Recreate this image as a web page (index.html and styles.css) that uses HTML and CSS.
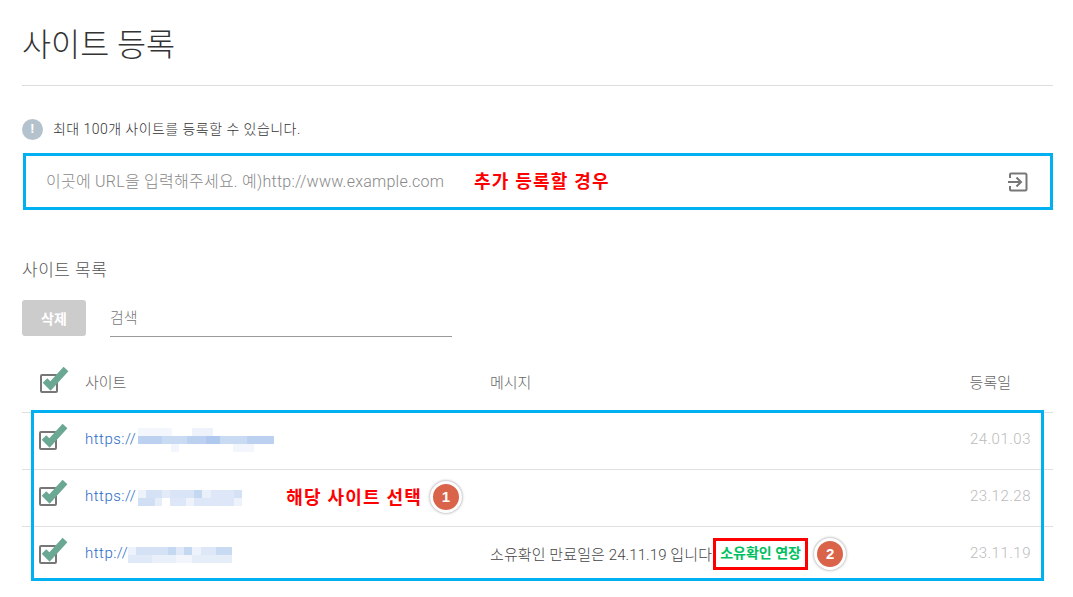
FILE: index.html
```html
<!DOCTYPE html>
<html lang="ko">
<head>
<meta charset="utf-8">
<title>사이트 등록</title>
<link rel="stylesheet" href="styles.css">
</head>
<body>
<main class="page">
  <h1 class="title">사이트 등록</h1>
  <p class="notice">
    <span class="notice-icon">!</span>
    <span>최대 100개 사이트를 등록할 수 있습니다.</span>
  </p>
  <div class="url-box">
    <span class="placeholder">이곳에 URL을 입력해주세요. 예)http://www.example.com</span>
    <span class="note note-url">추가 등록할 경우</span>
    <svg class="enter-icon" width="20" height="20" viewBox="0 0 20 20" fill="none" stroke="#777" stroke-width="2">
      <path d="M2 6V2.500Q2 1.500 3 1.500H17Q18.500 1.500 18.500 3V17Q18.500 18.500 17 18.500H3Q2 18.500 2 17.500V14"/>
      <path d="M0 10H12M8.500 5.500L13 10L8.500 14.500"/>
    </svg>
  </div>
  <h2 class="list-title">사이트 목록</h2>
  <div class="toolbar">
    <button class="delete-btn" type="button">삭제</button>
    <div class="search">검색</div>
  </div>
  <div class="table">
    <div class="row head">
      <div class="check check-head"><svg class="check-svg" width="30" height="28" viewBox="0 0 30 28"><rect x="2" y="10" width="16" height="17" rx="1" fill="#fff" stroke="#777" stroke-width="2"/><path d="M6 15.500L11.500 21L27 4" fill="none" stroke="#6ba893" stroke-width="6.500"/></svg></div>
      <div>사이트</div>
      <div>메시지</div>
      <div class="date-head">등록일</div>
    </div>
    <div class="row">
      <div class="check check-a"><svg class="check-svg" width="30" height="28" viewBox="0 0 30 28"><rect x="2" y="10" width="16" height="17" rx="1" fill="#fff" stroke="#777" stroke-width="2"/><path d="M6 15.500L11.500 21L27 4" fill="none" stroke="#6ba893" stroke-width="6.500"/></svg></div>
      <div class="site"><a class="link link-s">https://</a><span class="mosaic mosaic-1"></span></div>
      <div class="msg"></div>
      <div class="date">24.01.03</div>
    </div>
    <div class="row">
      <div class="check check-b"><svg class="check-svg" width="30" height="28" viewBox="0 0 30 28"><rect x="2" y="10" width="16" height="17" rx="1" fill="#fff" stroke="#777" stroke-width="2"/><path d="M6 15.500L11.500 21L27 4" fill="none" stroke="#6ba893" stroke-width="6.500"/></svg></div>
      <div class="site"><a class="link link-s">https://</a><span class="mosaic mosaic-2"></span><span class="note note-select">해당 사이트 선택</span><span class="badge">1</span></div>
      <div class="msg"></div>
      <div class="date">23.12.28</div>
    </div>
    <div class="row last">
      <div class="check check-a"><svg class="check-svg" width="30" height="28" viewBox="0 0 30 28"><rect x="2" y="10" width="16" height="17" rx="1" fill="#fff" stroke="#777" stroke-width="2"/><path d="M6 15.500L11.500 21L27 4" fill="none" stroke="#6ba893" stroke-width="6.500"/></svg></div>
      <div class="site"><a class="link">http://</a><span class="mosaic mosaic-3"></span></div>
      <div class="msg"><span class="msg-text">소유확인 만료일은 24.11.19 입니다</span><a class="extend">소유확인 연장</a><span class="badge badge-2">2</span></div>
      <div class="date">23.11.19</div>
    </div>
    <div class="highlight"></div>
  </div>
</main>
</body>
</html>
```
FILE: styles.css
```css
* { box-sizing: border-box; }
html, body { margin: 0; padding: 0; background: #fff; height: 597px; overflow: hidden; }
body { font-family: Roboto, "Noto Sans CJK KR", sans-serif; font-weight: 300; color: #444; }
.page { padding-left: 22px; padding-right: 20px; }

.title {
  margin: 0;
  height: 86px;
  padding-top: 21px;
  border-bottom: 1px solid #ddd;
  font-size: 31.6px;
  line-height: 50px;
  font-weight: 300;
  color: #333;
}

.notice {
  margin: 33px 0 0;
  height: 20px;
  display: flex;
  align-items: center;
  gap: 10px;
  font-size: 14px;
  line-height: 20px;
  letter-spacing: .45px;
  color: #333;
}
.notice-icon {
  width: 21px;
  height: 21px;
  border-radius: 50%;
  background: #b3c2cd;
  color: #fff;
  font-weight: 700;
  font-size: 13px;
  text-align: center;
}

.url-box {
  margin: 14px 0 0 1px;
  height: 57px;
  border: 3px solid #00b0f0;
  display: flex;
  align-items: center;
  padding: 0 22px 4px 20px;
}
.placeholder { font-size: 16px; letter-spacing: .25px; color: #888; width: 428px; white-space: nowrap; }
.note { color: #f00; font-weight: 700; font-size: 18px; letter-spacing: 1.2px; white-space: nowrap; }
.enter-icon { margin-left: auto; margin-top: 5px; }

.list-title {
  margin: 50px 0 0;
  height: 20px;
  font-size: 17px;
  line-height: 20px;
  letter-spacing: .5px;
  font-weight: 300;
  color: #555;
}

.toolbar { margin-top: 20px; display: flex; gap: 24px; }
.delete-btn {
  width: 64px;
  height: 36px;
  border: 0;
  padding: 0;
  border-radius: 3px;
  background: #ccc;
  color: #fff;
  font: 700 14px Roboto, "Noto Sans CJK KR", sans-serif;
}
.search {
  width: 342px;
  height: 37px;
  border-bottom: 1px solid #999;
  font-size: 15px;
  line-height: 37px;
  color: #777;
}

.table { position: relative; margin-top: 25px; }
.row {
  display: grid;
  grid-template-columns: 63px 405px 1fr 100px;
  align-items: center;
  height: 57px;
  padding-bottom: 2px;
  border-bottom: 1px solid #e0e0e0;
  font-size: 15px;
  color: #444;
}
.row.head { height: 51px; padding-bottom: 12px; color: #666; }
.row.last { height: 56px; border-bottom: 0; }
.check { align-self: start; display: flex; }
.check-svg { display: block; }
.check-head { padding: 3px 0 0 17px; }
.check-a { padding: 9px 0 0 16px; }
.check-b { padding: 8px 0 0 16px; }
.date-head { text-align: right; padding-right: 42px; white-space: nowrap; justify-self: end; }
.date { text-align: right; padding: 0 22px 2px 0; color: #bbb; font-size: 15px; letter-spacing: .5px; }

.site { display: flex; align-items: center; }
.link { color: #2a6bc4; font-size: 15px; letter-spacing: .5px; padding-bottom: 2px; }
.link-s { margin-right: 2px; }
.mosaic { display: block; height: 16px; flex: none; }
.mosaic-1 {
  width: 136px;
  height: 24px;
  background:
    linear-gradient(90deg, #f3f6fc 0 25%, #fff 25% 40%, #eef3fb 40% 55%, #fff 55% 100%) 0 0/100% 8px no-repeat,
    linear-gradient(90deg, #bcd1f0 0 18%, #c9daf3 18% 36%, #bcd1f0 36% 50%, #afc9ee 50% 60%, #c9daf3 60% 80%, #bcd1f0 80% 100%) 0 8px/100% 8px no-repeat,
    linear-gradient(90deg, #fff 0 24%, #f3f6fc 24% 30%, #fff 30% 70%, #f3f6fc 70% 85%, #fff 85%) 0 16px/100% 8px no-repeat;
}
.mosaic-2 {
  width: 104px;
  margin-top: 2px;
  background:
    linear-gradient(90deg, #eef3fb 0 8%, #d5e2f5 8% 23%, #e3ebf8 23% 31%, #d9e5f6 31% 54%, #c5d8f2 54% 62%, #e9f0fa 62% 70%, #dde7f7 70% 92%, #d5e2f5 92%) 0 0/100% 8px no-repeat,
    linear-gradient(90deg, #d0dff4 0 16%, #e5edf9 16% 23%, #fff 23% 31%, #dde7f7 31% 46%, #eef3fb 46% 54%, #dde7f7 54% 92%, #eef3fb 92%) 0 8px/100% 8px no-repeat;
}
.mosaic-3 {
  width: 104px;
  margin-top: 2px;
  background:
    linear-gradient(90deg, #eef3fb 0 8%, #d5e2f5 8% 38%, #c5d8f2 38% 46%, #e0e9f8 46% 54%, #c5d8f2 54% 62%, #eef3fb 62% 70%, #dde7f7 70% 85%, #c9daf3 85% 100%) 0 0/100% 8px no-repeat,
    linear-gradient(90deg, #e0e9f8 0 23%, #e9f0fa 23% 46%, #f2f5fc 46% 62%, #e5edf9 62% 100%) 0 8px/100% 8px no-repeat;
}
.note-select { margin-left: 44px; padding-bottom: 2px; }

.badge {
  flex: none;
  width: 32px;
  height: 32px;
  border-radius: 50%;
  border: 3px solid #fff;
  background: #d9644a;
  box-shadow: 0 0 3px rgba(0,0,0,.45);
  color: #fff;
  font: 700 15px/26px "Liberation Sans", sans-serif;
  text-align: center;
  margin-left: 8px;
}
.msg { display: flex; align-items: center; white-space: nowrap; }
.msg-text { letter-spacing: .1px; padding-bottom: 2px; }
.extend {
  margin-left: 1px;
  flex: none;
  width: 95px;
  height: 32px;
  border: 3px solid #f00;
  color: #00c060;
  font-size: 14px;
  font-weight: 700;
  line-height: 25px;
  text-align: center;
  white-space: nowrap;
}
.badge-2 { margin-left: 6px; }

.highlight {
  position: absolute;
  left: 9px;
  top: 48px;
  width: 1013px;
  height: 171px;
  border: 3px solid #00b0f0;
  pointer-events: none;
}
```
